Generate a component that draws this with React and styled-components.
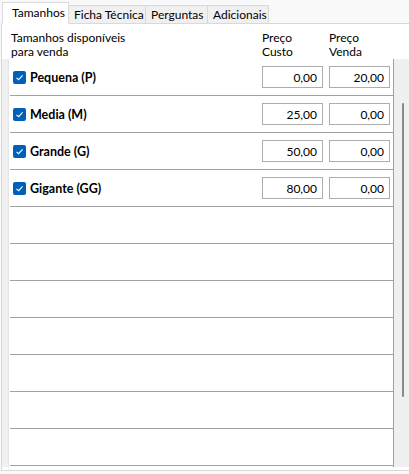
import React from "react";
import styled, { createGlobalStyle } from "styled-components";

const Global = createGlobalStyle`
  html, body { margin: 0; padding: 0; background: #ffffff; }
  body { font-family: Lato, "Noto Sans", sans-serif; font-size: 12px; color: #000; }
`;

const Window = styled.div`
  width: 409px;
  height: 474px;
  background: #f9f9f9;
  display: flex;
  flex-direction: column;
  overflow: hidden;
`;

const TabStrip = styled.div`
  display: flex;
  align-items: flex-end;
  height: 23px;
  padding-left: 2px;
  position: relative;
  z-index: 1;
`;

const Tab = styled.div`
  box-sizing: border-box;
  height: ${(p) => (p.$active ? "22px" : "19px")};
  width: ${(p) => p.$w}px;
  margin-left: ${(p) => (p.$first ? 0 : -1)}px;
  border: 1px solid #d9d9d9;
  border-bottom: ${(p) => (p.$active ? "1px solid #ffffff" : "1px solid #d9d9d9")};
  background: ${(p) => (p.$active ? "#ffffff" : "#f0f0f0")};
  margin-bottom: -1px;
  display: flex;
  align-items: center;
  padding-left: ${(p) => (p.$active ? 9 : 5)}px;
  padding-bottom: ${(p) => (p.$active ? 2 : 0)}px;
  font-size: 12px;
  white-space: nowrap;
  color: #000;
  z-index: ${(p) => (p.$active ? 2 : 1)};
`;

const Panel = styled.div`
  flex: 1;
  box-sizing: border-box;
  margin: 0 0 3px 1px;
  border: 1px solid #d9d9d9;
  border-right: none;
  background: #ffffff;
  display: flex;
  flex-direction: column;
`;

const Header = styled.div`
  height: 35px;
  display: flex;
  padding: 7px 0 0 9px;
  box-sizing: border-box;
  line-height: 14px;
  font-size: 12px;
`;

const HeadCell = styled.div`
  width: ${(p) => p.$w}px;
  flex: none;
`;

const Body = styled.div`
  display: flex;
  height: 408px;
`;

const LeftStrip = styled.div`
  width: 6px;
  background: #f0f0f0;
  border-right: 1px solid #e6e6e6;
  flex: none;
`;

const List = styled.div`
  width: 383px;
  flex: none;
  margin-left: 1px;
  border-right: 1px solid #a0a0a0;
  display: flex;
  flex-direction: column;
`;

const Row = styled.div`
  height: 36px;
  flex: none;
  border-bottom: 1px solid #a0a0a0;
  display: flex;
  align-items: center;
  padding-left: 3px;
`;

const Check = styled.span`
  width: 13px;
  height: 13px;
  border-radius: 2px;
  background: #005fb8;
  display: inline-flex;
  align-items: center;
  justify-content: center;
  flex: none;
`;

const Label = styled.span`
  font-weight: 700;
  font-size: 12.5px;
  margin-left: 4px;
  width: 232px;
  flex: none;
  white-space: nowrap;
`;

const Input = styled.div`
  box-sizing: border-box;
  width: 61px;
  height: 22px;
  border: 1px solid #adadad;
  background: #fff;
  display: flex;
  align-items: center;
  justify-content: flex-end;
  padding-right: 5px;
  font-size: 12px;
  margin-right: ${(p) => p.$mr || 0}px;
  flex: none;
`;

const Scrollbar = styled.div`
  width: 16px;
  flex: none;
  background: #f0f0f0;
  position: relative;
`;

const Thumb = styled.div`
  position: absolute;
  left: 8px;
  top: 44px;
  width: 2px;
  height: 294px;
  background: #8a8a8a;
  border-radius: 1px;
`;

const CheckIcon = () => (
  <Check>
    <svg width="9" height="9" viewBox="0 0 9 9">
      <path d="M1.5 4.8 L3.6 6.7 L7.6 2.3" fill="none" stroke="#ffffff" strokeWidth="1.1" />
    </svg>
  </Check>
);

const rows = [
  { name: "Pequena (P)", custo: "0,00", venda: "20,00" },
  { name: "Media (M)", custo: "25,00", venda: "0,00" },
  { name: "Grande (G)", custo: "50,00", venda: "0,00" },
  { name: "Gigante (GG)", custo: "80,00", venda: "0,00" },
];

export default function App() {
  return (
    <>
      <Global />
      <Window>
        <TabStrip>
          <Tab $active $first $w={67}>Tamanhos</Tab>
          <Tab $w={78}>Ficha Técnica</Tab>
          <Tab $w={63}>Perguntas</Tab>
          <Tab $w={62}>Adicionais</Tab>
        </TabStrip>
        <Panel>
          <Header>
            <HeadCell $w={251}>Tamanhos disponíveis<br />para venda</HeadCell>
            <HeadCell $w={67}>Preço<br />Custo</HeadCell>
            <HeadCell $w={60}>Preço<br />Venda</HeadCell>
          </Header>
          <Body>
            <LeftStrip />
            <List>
              {rows.map((r) => (
                <Row key={r.name}>
                  <CheckIcon />
                  <Label>{r.name}</Label>
                  <Input $mr={6}>{r.custo}</Input>
                  <Input>{r.venda}</Input>
                </Row>
              ))}
              {Array.from({ length: 7 }).map((_, i) => (
                <Row key={"e" + i} />
              ))}
            </List>
            <Scrollbar>
              <Thumb />
            </Scrollbar>
          </Body>
        </Panel>
      </Window>
    </>
  );
}
